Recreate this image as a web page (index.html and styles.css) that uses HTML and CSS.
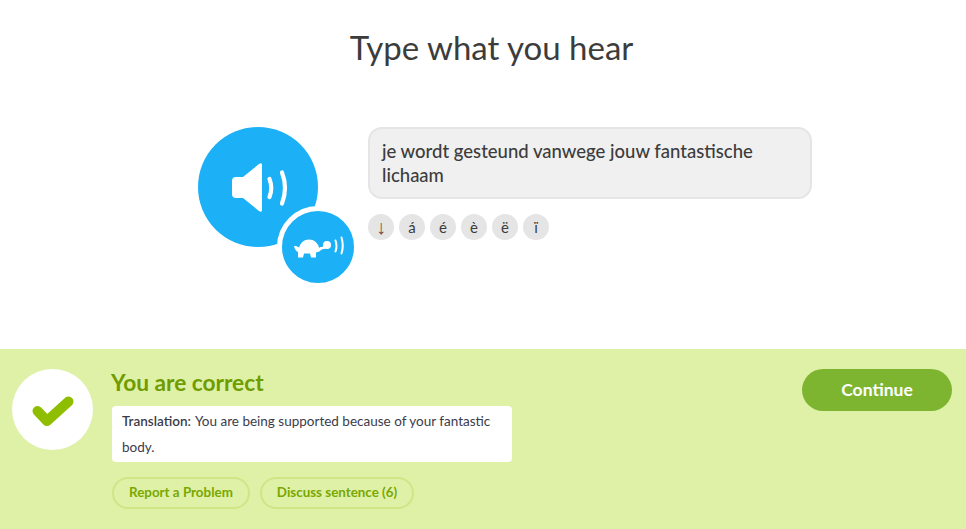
FILE: index.html
```html
<!DOCTYPE html>
<html>
<head>
    <meta charset="utf-8">
    <title>Type what you hear</title>
    <link rel="stylesheet" href="styles.css">
</head>
<body>
    <div class="challenge">
        <h1 class="prompt">Type what you hear</h1>
        <div class="exercise">
            <div class="speakers">
                <div class="speaker">
                    <svg width="120" height="120" viewBox="0 0 120 120">
                        <path d="M38 50h7l16-13q3-2 3 1v45q0 3-3 1L45 71h-7q-4 0-4-4V54q0-4 4-4z" fill="#fff"/>
                        <path d="M71.500 52q3.500 9 0 18M84 45.500q6 15.500 0 31" fill="none" stroke="#fff" stroke-width="4.200" stroke-linecap="round"/>
                    </svg>
                </div>
                <div class="speakerSlow">
                    <svg width="72" height="72" viewBox="0 0 72 72">
                        <path d="M14 35l3.200 1.500c1-4.500 5-8 9.800-8s8.800 3.500 10 8l3 1.500c-1.500 2-3.500 3.200-6 3.500v5h-5l-1-4h-6l-1 4h-5v-5.500c-2-.8-3.500-3-4-6z" fill="#fff"/>
                        <path d="M38 37.500l5-1" stroke="#fff" stroke-width="2.500"/>
                        <circle cx="45" cy="34" r="4" fill="#fff"/>
                        <path d="M53.500 29.500q2 5.500 0 11M59.500 26.500q2.500 8 0 16" fill="none" stroke="#fff" stroke-width="2" stroke-linecap="round"/>
                    </svg>
                </div>
            </div>
            <div class="answer">
                <div class="answerBox">je wordt gesteund vanwege jouw fantastische lichaam</div>
                <div class="accents">
                    <span class="accent"><span class="arrow">↓</span></span>
                    <span class="accent">á</span>
                    <span class="accent">é</span>
                    <span class="accent">è</span>
                    <span class="accent">ë</span>
                    <span class="accent">ï</span>
                </div>
            </div>
        </div>
    </div>
    <div class="result">
        <div class="checkCircle">
            <svg width="42" height="32" viewBox="0 0 42 32">
                <path d="M5.500 16L15 26L36.500 6.500" fill="none" stroke="#8fbe00" stroke-width="10" stroke-linecap="round" stroke-linejoin="round"/>
            </svg>
        </div>
        <div class="resultBody">
            <h2 class="resultTitle">You are correct</h2>
            <div class="translation"><b class="label">Translation:</b> You are being supported because of your fantastic body.</div>
            <div class="pills">
                <a class="pill">Report a Problem</a>
                <a class="pill">Discuss sentence (6)</a>
            </div>
        </div>
        <a class="continue">Continue</a>
    </div>
</body>
</html>
```

FILE: styles.css
```css
html, body {
    height: 100%;
}

body {
    margin: 0;
    display: flex;
    flex-direction: column;
    font-family: "Lato", "Open Sans", sans-serif;
    background-color: #fff;
    color: #3c3c3c;
    overflow: hidden;
}

.challenge {
    flex: 1;
}

.prompt {
    margin: 27px 0 0 17px;
    font-size: 33px;
    line-height: 40px;
    font-weight: 400;
    text-align: center;
}

.exercise {
    display: flex;
    padding: 60px 0 0 198px;
}

.speakers {
    position: relative;
    width: 170px;
    height: 160px;
}

.speaker {
    width: 120px;
    height: 120px;
    border-radius: 50%;
    background-color: #1cb0f6;
}

.speakerSlow {
    position: absolute;
    left: 79px;
    top: 79px;
    width: 72px;
    height: 72px;
    border: 5px solid #fff;
    border-radius: 50%;
    background-color: #1cb0f6;
}

.speaker svg, .speakerSlow svg {
    display: block;
}

.answer {
    width: 444px;
}

.answerBox {
    box-sizing: border-box;
    height: 72px;
    padding: 10px 12px;
    border: 2px solid #e5e5e5;
    border-radius: 14px;
    background-color: #f0f0f0;
    font-size: 18.500px;
    font-weight: 500;
    line-height: 24px;
}

.accents {
    display: flex;
    gap: 5px;
    margin-top: 15px;
}

.accent {
    width: 26px;
    height: 26px;
    border-radius: 50%;
    background-color: #e5e5e5;
    font-size: 15px;
    line-height: 26px;
    text-align: center;
}

.arrow {
    color: #8a4a3a;
    font-family: "Liberation Serif", serif;
    font-size: 20px;
}

.result {
    display: flex;
    align-items: flex-start;
    height: 180px;
    box-sizing: border-box;
    padding: 20px 14px 0 12px;
    background-color: #dff0a7;
}

.checkCircle {
    display: flex;
    align-items: center;
    justify-content: center;
    width: 81px;
    height: 81px;
    flex-shrink: 0;
    border-radius: 50%;
    background-color: #fff;
}

.checkCircle svg {
    margin-top: 3px;
}

.resultBody {
    flex: 1;
    margin-left: 19px;
}

.resultTitle {
    margin: 2px 0 0 -1px;
    font-size: 22.700px;
    line-height: 24px;
    font-weight: 700;
    color: #6f9c00;
}

.translation {
    box-sizing: border-box;
    width: 400px;
    height: 56px;
    margin-top: 11px;
    padding: 2px 10px;
    border-radius: 4px;
    background-color: #fff;
    font-size: 13.500px;
    line-height: 26px;
    color: #3b3b4a;
}

.label {
    margin-right: 1px;
    font-weight: 600;
}

.pills {
    display: flex;
    gap: 10px;
    margin-top: 15px;
}

.pill {
    padding: 0 15px;
    height: 28px;
    border: 2px solid #cfe686;
    border-radius: 16px;
    font-size: 13.400px;
    line-height: 27px;
    font-weight: 700;
    color: #79a800;
}

.continue {
    width: 150px;
    height: 42px;
    border-radius: 21px;
    background-color: #7eb530;
    color: #fff;
    font-size: 17.500px;
    font-weight: 700;
    line-height: 42px;
    text-align: center;
}
```
